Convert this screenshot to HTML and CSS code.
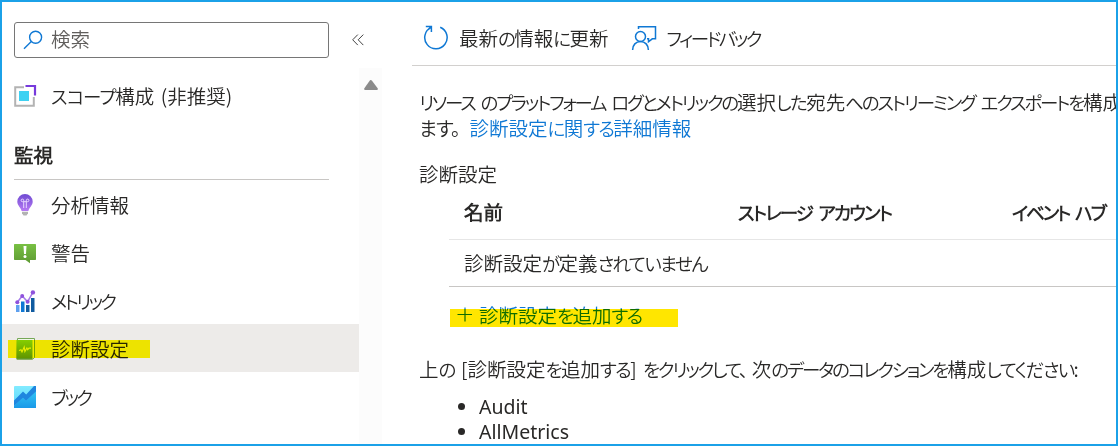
FILE: index.html
```html
<!DOCTYPE html>
<html lang="ja">
<head>
<meta charset="utf-8">
<title>診断設定</title>
<link rel="stylesheet" href="styles.css">
</head>
<body>
<div class="frame">
  <aside class="sidebar">
    <div class="search-row">
      <div class="search">
        <svg width="20" height="20" viewBox="0 0 20 20" fill="none" stroke="#0f78d4" stroke-width="1.4"><circle cx="12.6" cy="7.2" r="6"/><path d="M8.3 11.5 1 18.7"/></svg>
        <span class="t">検索</span>
      </div>
      <svg class="collapse" width="12" height="12" viewBox="0 0 12 12" fill="none" stroke="#444" stroke-width="1"><path d="M5.8.6.7 5.8l5.1 5.3M11.3.6 6.2 5.8l5.1 5.3"/></svg>
    </div>
    <div class="nav-area">
      <nav class="nav">
        <a class="item first">
          <svg class="icon" width="24" height="24" viewBox="0 0 24 24"><path d="M11 3.2H2.2v18.600h18.600V13" fill="none" stroke="#b3b3b3" stroke-width="2"/><path d="M12.500 2h9.500v9.500" fill="none" stroke="#773adc" stroke-width="2.200"/><path d="M6 7h10v10H6z" fill="#3fd1f2"/></svg>
          <span class="t scope"><span class="k">スコープ</span>構成 (非推奨)</span>
        </a>
        <h2 class="group"><span class="t">監視</span></h2>
        <a class="item">
          <svg class="icon" width="24" height="24" viewBox="0 0 24 24"><defs><linearGradient id="bulb" x2="0" y2="1"><stop stop-color="#6f4bd2"/><stop offset="1" stop-color="#b77af4"/></linearGradient></defs><path d="M12 1a7.700 7.700 0 0 0-7.700 7.800c0 3.700 3.500 5.600 4.300 9.200h6.800c.8-3.600 4.300-5.500 4.300-9.200A7.700 7.700 0 0 0 12 1z" fill="url(#bulb)"/><path d="M10.700 15V8.700H9.300a1.300 1.300 0 1 1 1.400-1.400v1.400h2.600V7.300a1.300 1.300 0 1 1 1.400 1.400h-1.400V15" fill="none" stroke="#e9d8ff" stroke-width="1"/><path d="M9 18.700h6v1.600l-1.500 2.200h-3L9 20.300z" fill="#b3b3b3"/></svg>
          <span class="t">分析情報</span>
        </a>
        <a class="item">
          <svg class="icon" width="24" height="24" viewBox="0 0 24 24"><defs><linearGradient id="alert" x2="0" y2="1"><stop stop-color="#78c043"/><stop offset="1" stop-color="#5e9a33"/></linearGradient></defs><path d="M1.600 3h20.800l.6.6v14.800l-.6.600H17v3.200L12.500 19H1.600l-.6-.6V3.600z" fill="url(#alert)"/><path d="M10.500 5h3l-.5 8h-2z" fill="#fff"/><circle cx="12" cy="15.600" r="1.500" fill="#fff"/></svg>
          <span class="t">警告</span>
        </a>
        <a class="item">
          <svg class="icon" width="24" height="24" viewBox="0 0 24 24"><path d="M3 16h3.500v7H3z" fill="#5ea0ef"/><path d="M8 12.500h3.500V23H8z" fill="#0f78d4"/><path d="M13 16h3.500v7H13z" fill="#155ea1"/><path d="M18 9h3.500v14H18z" fill="#0f5ba0"/><path d="M4.300 13.200 9.200 7l5.400 5.700L19.900 3.400" fill="none" stroke="#a57bea" stroke-width="1.500"/><g fill="#8f52dc"><circle cx="4.300" cy="13.200" r="2"/><circle cx="9.200" cy="7" r="2"/><circle cx="14.600" cy="12.700" r="2"/><circle cx="19.900" cy="3.400" r="2.200"/></g></svg>
          <span class="t kk metric">メトリック</span>
        </a>
        <a class="item selected">
          <svg class="icon" width="24" height="24" viewBox="0 0 24 24"><defs><linearGradient id="book" x2="0" y2="1"><stop stop-color="#86d633"/><stop offset="1" stop-color="#5e9624"/></linearGradient></defs><path d="M4.500 1.500h17v19l-1.500 1.500H4z" fill="#f2f7ec" stroke="#76a857" stroke-width="1"/><path d="M3.500 3h16v19.500h-16z" fill="url(#book)"/><path d="m6 13.500 2-.7 1 2.200 2.200-5 .7 4.500 2-3.500.8 1.700 1.300-1.600h2" fill="none" stroke="#eef8dc" stroke-width="1.100"/></svg>
          <span class="t">診断設定</span>
          <i class="marker"></i>
        </a>
        <a class="item">
          <svg class="icon" width="24" height="24" viewBox="0 0 24 24"><defs><linearGradient id="wb" x2="0" y2="1"><stop stop-color="#83ebff"/><stop offset="1" stop-color="#56d6fb"/></linearGradient><linearGradient id="wb2" x2="0" y2="1"><stop stop-color="#32c5f4"/><stop offset="1" stop-color="#1a99e8"/></linearGradient></defs><rect x="1" y="1" width="22" height="22" rx="1" fill="url(#wb)"/><path d="m1 21 9-8.500 3 3L23 6v17H1z" fill="url(#wb2)"/><path d="m1 15.500 9-9L13.200 9.500 21 1h2v5.500L13 15.700l-3-3L1 21z" fill="#1f86df"/></svg>
          <span class="t kk metric">ブック</span>
        </a>
      </nav>
      <div class="scroll"><svg width="14" height="10" viewBox="0 0 14 10"><path d="M6 .3Q7-.3 8 .8L13.800 8.500Q14 10 13 10H1Q0 10 .2 8.500z" fill="#8b8b8b"/></svg></div>
    </div>
  </aside>
  <main class="main">
    <div class="toolbar">
      <svg width="26" height="26" viewBox="0 0 26 26" fill="none" stroke="#0f78d4" stroke-width="1.500"><path d="M17.200 2.200A11.200 11.200 0 1 1 8.200 2.400M2.800 1.400h5.600v5.500M8.400 1.400 5.200 4.600"/></svg>
      <span class="t">最新<span class="k">の</span>情報<span class="k">に</span>更新</span>
      <svg class="fb" width="26" height="26" viewBox="0 0 26 26" fill="none" stroke="#0f78d4" stroke-width="1.500"><circle cx="9.500" cy="11.500" r="5"/><path d="M1.600 25c0-5 3.300-8.500 7.900-8.500s7.900 3.500 7.900 8.500M7.500 4V1.800h17v12h-3.200l-3.800 3v-3H16"/></svg>
      <span class="t kk feedback">フィードバック</span>
    </div>
    <div class="content">
      <p class="intro"><span class="t"><span class="kk">リソース のプラットフォーム ログとメトリックの</span>選択<span class="k">した</span>宛先<span class="kk">へのストリーミング エクスポートを</span>構成</span><br><span class="t"><span class="k masu">ます。</span><a class="link">診断設定<span class="k">に</span>関<span class="k">する</span>詳細情報</a></span></p>
      <p class="caption"><span class="t">診断設定</span></p>
      <div class="table">
        <div class="row head"><span class="t">名前</span><span class="t kk storage">ストレージ アカウント</span><span class="t kk">イベント ハブ</span></div>
        <div class="row empty"><span class="t">診断設定<span class="k">が</span>定義<span class="k">されていません</span></span></div>
      </div>
      <div class="add link">
        <svg width="16" height="16" viewBox="0 0 16 16" stroke="#0f78d4" stroke-width="1.200"><path d="M8 .5v14M.5 7.500h14.500"/></svg>
        <span class="t">診断設定<span class="k">を</span>追加<span class="k">する</span></span>
        <i class="marker"></i>
      </div>
      <p class="hint"><span class="t">上<span class="k">の</span> [診断設定<span class="k">を</span>追加<span class="k">する</span>] <span class="kk">をクリックして<span class="comma">、</span></span>次<span class="kk">のデータのコレクションを</span>構成<span class="k">してください</span>:</span></p>
      <ul class="list"><li>Audit</li><li>AllMetrics</li></ul>
    </div>
  </main>
</div>
</body>
</html>
```
FILE: styles.css
```css
* { box-sizing: border-box; }
body { margin: 0; background: #fff; color: #292827; font: 350 19.500px/24px "Noto Sans CJK JP DemiLight", "Noto Sans CJK JP", sans-serif; }
h2, p, ul { margin: 0; padding: 0; font-size: inherit; }
.frame { display: flex; width: 1118px; height: 446px; border: 2px solid #1ba1e8; overflow: hidden; }
.t { white-space: nowrap; display: inline-block; word-spacing: 2px; }
.k, .kk { font-feature-settings: "palt"; font-size: 18.500px; letter-spacing: -1.600px; word-spacing: 4px; }
.kk { letter-spacing: -2.200px; }
.metric { letter-spacing: -2.700px; }
.feedback { letter-spacing: -2.500px; }
.storage { letter-spacing: -1.800px; }
.link { color: #0f78d4; }
svg { flex: none; display: block; }

.sidebar { width: 380px; flex: none; display: flex; flex-direction: column; }
.search-row { display: flex; align-items: center; height: 66px; padding: 10px 0 0 12px; gap: 23px; }
.search { width: 315px; height: 36px; border: 1px solid #767676; border-radius: 3px; display: flex; align-items: center; padding-left: 8px; gap: 8px; color: #605e5c; }
.search .t { margin-top: -2px; }
.nav-area { display: flex; flex: 1; }
.nav { width: 357px; }
.item { display: flex; align-items: center; height: 48px; padding: 2px 0 0 11px; gap: 14px; position: relative; }
.item.first { height: 56px; padding-top: 0; }
.scope .k { letter-spacing: -1px; }
.group { height: 56px; margin: 0 30px 0 12px; padding-top: 19px; border-bottom: 1px solid #c8c6c4; font-weight: 700; }
.selected { background: #edebe9; }
.scroll { width: 23px; background: #fcfcfc; padding: 12px 0 0 5px; }
.marker { position: absolute; left: 6px; top: 16px; width: 142px; height: 18px; background: #fff700; mix-blend-mode: multiply; }

.main { flex: 1; min-width: 0; padding-left: 30px; }
.toolbar { height: 64px; display: flex; align-items: center; padding: 9px 0 0 11px; gap: 10px; border-bottom: 1px solid #d2d0ce; }
.fb { margin-left: 12px; }
.content { padding-left: 7px; }
.intro { padding-top: 23px; line-height: 25px; }
.masu { font-size: 19.500px; letter-spacing: -1px; margin-right: 10px; }
.caption { padding-top: 20px; line-height: 25px; }
.table { margin-left: 30px; }
.row { display: grid; grid-template-columns: 274px 274px 1fr; padding-left: 15px; align-items: center; }
.head { height: 54px; padding-bottom: 1px; border-bottom: 1px solid #e6e6e6; font-weight: 700; }
.empty { height: 47px; border-bottom: 1px solid #c8c6c4; }
.add { position: relative; margin-left: 30px; height: 56px; padding-left: 8px; display: flex; align-items: center; gap: 6px; }
.add .marker { left: 1px; top: 22px; width: 228px; background: #ffe600; }
.hint { padding-top: 14px; }
.comma { margin-right: 6px; }
.list { padding: 13px 0 0 60px; font-family: "Noto Sans", sans-serif; font-weight: 400; font-size: 19.500px; line-height: 25px; }
```
